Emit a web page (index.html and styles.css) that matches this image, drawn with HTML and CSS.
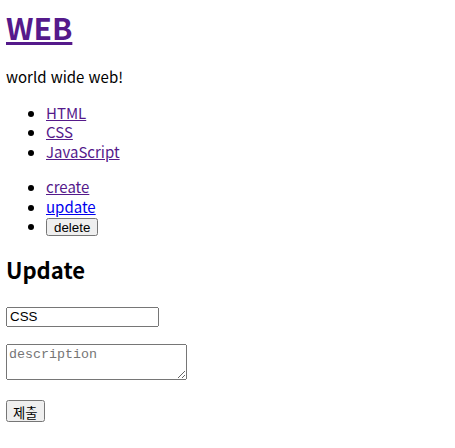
FILE: index.html
```html
<!DOCTYPE html>
<html lang="ko">
<head>
  <meta charset="UTF-8" />
  <title>WEB</title>
  <link rel="stylesheet" href="styles.css">
</head>
<body>
  <h1><a href="#" class="visited">WEB</a></h1>
  <p>world wide web!</p>
  <ul class="nav">
    <li><a href="#" class="visited">HTML</a></li>
    <li><a href="#" class="visited">CSS</a></li>
    <li><a href="#" class="visited">JavaScript</a></li>
  </ul>
  <ul class="control">
    <li><a href="#" class="visited">create</a></li>
    <li><a href="#">update</a></li>
    <li><button type="button">delete</button></li>
  </ul>
  <h2>Update</h2>
  <form>
    <p><input type="text" name="title" value="CSS" /></p>
    <p><textarea name="body" placeholder="description"></textarea></p>
    <p><input type="submit" value="제출" /></p>
  </form>
</body>
</html>
```

FILE: styles.css
```css
body {
  margin: 8px 6px;
  font-family: "Noto Sans CJK KR", "Noto Sans", sans-serif;
  font-size: 15px;
  line-height: 19.5px;
  color: #000;
}

a {
  color: #0000ee;
}

a.visited {
  color: #551a8b;
}

h1 {
  font-size: 30px;
  line-height: 38px;
  margin: 0 0 21px;
}

h2 {
  font-size: 22px;
  line-height: 28px;
  margin: 19px 0 22px;
}

p {
  margin: 16px 0;
}

form p {
  margin: 17px 0;
}

ul {
  margin: 16px 0;
  padding-left: 40px;
}

input, button, textarea {
  font-family: "Liberation Sans", "Noto Sans CJK KR", sans-serif;
  font-size: 13.33px;
}

input[type=text] {
  box-sizing: border-box;
  width: 153px;
  height: 20px;
  padding: 1px 2px;
}

input[type=submit] {
  box-sizing: border-box;
  padding: 1px 5px;
  height: 22px;
}

button {
  padding: 0 6px;
  height: 18px;
}

textarea {
  font-family: "Liberation Mono", monospace;
}
```
